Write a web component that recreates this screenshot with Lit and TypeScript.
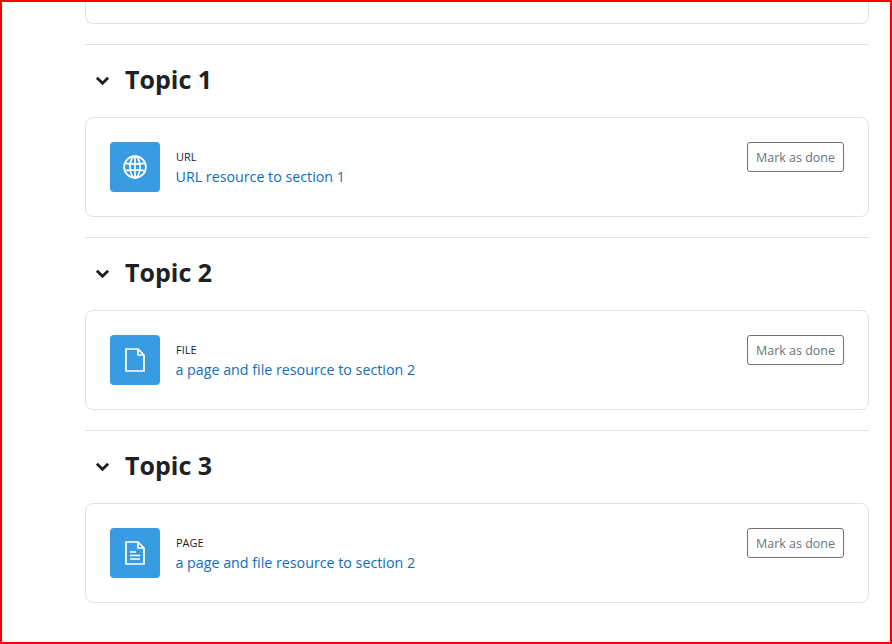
import { LitElement, html, css, svg } from 'lit';
import { customElement } from 'lit/decorators.js';

const icons = {
  url: svg`<circle cx="12" cy="12" r="10.9"/><ellipse cx="12" cy="12" rx="5" ry="10.9"/><path d="M12 1.1v21.8M2.6 8.4q9.4 1.6 18.8 0M2.6 15.6q9.4-1.6 18.8 0"/>`,
  file: svg`<path d="M3 1h12l6 6v16H3z"/><path d="M15 1v6h6"/>`,
  page: svg`<path d="M3 1h12l6 6v16H3z"/><path d="M15 1v6h6M7 11h6M7 14.5h10M7 18h10"/>`,
};

const sections = [
  { title: 'Topic 1', type: 'URL', icon: icons.url, name: 'URL resource to section 1' },
  { title: 'Topic 2', type: 'FILE', icon: icons.file, name: 'a page and file resource to section 2' },
  { title: 'Topic 3', type: 'PAGE', icon: icons.page, name: 'a page and file resource to section 2' },
];

@customElement('app-root')
export class AppRoot extends LitElement {
  static styles = css`
    :host {
      display: block;
      box-sizing: border-box;
      height: 644px;
      overflow: hidden;
      border: 2px solid #ff0000;
      background: #fff;
      color: #1d2125;
      font-family: "Open Sans", "Noto Sans", sans-serif;
    }

    .course {
      width: 784px;
      margin-left: 83px;
    }

    .previous {
      box-sizing: border-box;
      height: 22px;
      border: 1px solid #dee2e6;
      border-top: 0;
      border-radius: 0 0 8px 8px;
    }

    .section {
      margin-top: 20px;
      border-top: 1px solid #dee2e6;
    }

    .heading {
      box-sizing: border-box;
      display: flex;
      align-items: center;
      gap: 15px;
      height: 72px;
      padding: 0 0 2px 10px;
    }

    .heading svg {
      width: 15px;
      height: 15px;
      fill: none;
      stroke: #1d2125;
      stroke-width: 3;
    }

    h3 {
      margin: 0 0 2px;
      font-size: 25px;
      line-height: 28px;
      font-weight: 700;
    }

    .card {
      box-sizing: border-box;
      display: flex;
      align-items: flex-start;
      height: 100px;
      padding: 24px;
      border: 1px solid #dee2e6;
      border-radius: 8px;
    }

    .icon {
      flex: none;
      display: flex;
      align-items: center;
      justify-content: center;
      width: 50px;
      height: 50px;
      margin-right: 16px;
      border-radius: 4px;
      background: #399be2;
    }

    .icon svg {
      width: 24px;
      height: 24px;
      fill: none;
      stroke: #fff;
      stroke-width: 1.7;
    }

    .text {
      flex: 1;
      padding-top: 7px;
    }

    .type {
      font-size: 11px;
      line-height: 15px;
      color: #1d2125;
    }

    .name {
      margin-top: 2px;
      margin-left: -0.5px;
      font-size: 14.25px;
      line-height: 21px;
      color: #0f6cbf;
    }

    button {
      box-sizing: border-box;
      width: 97px;
      height: 30px;
      padding: 0;
      border: 1px solid #6a737b;
      border-radius: 3px;
      background: #fff;
      color: #6a737b;
      font: inherit;
      font-size: 12.5px;
    }
  `;

  render() {
    return html`
      <div class="course">
        <div class="previous"></div>
        ${sections.map(
          (s) => html`
            <section class="section">
              <div class="heading">
                <svg viewBox="0 0 16 16"><path d="M2 5l6 6 6-6"/></svg>
                <h3>${s.title}</h3>
              </div>
              <div class="card">
                <div class="icon"><svg viewBox="0 0 24 24">${s.icon}</svg></div>
                <div class="text">
                  <div class="type">${s.type}</div>
                  <div class="name">${s.name}</div>
                </div>
                <button>Mark as done</button>
              </div>
            </section>
          `
        )}
      </div>
    `;
  }
}
